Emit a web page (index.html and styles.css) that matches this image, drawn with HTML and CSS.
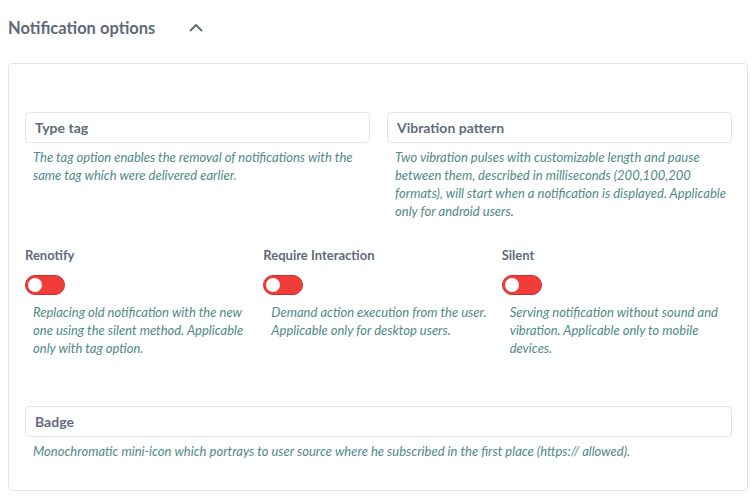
FILE: index.html
```html
<!DOCTYPE html>
<html>
<head>
<meta charset="utf-8">
<link rel="stylesheet" href="styles.css">
</head>
<body>
<div class="page">
  <div class="header">
    <span class="title">Notification options</span>
    <svg class="chevron" width="14" height="9" viewBox="0 0 14 9"><path d="M1.5 7.5 L7 2 L12.5 7.5" fill="none" stroke="#5d6977" stroke-width="1.8" stroke-linecap="round" stroke-linejoin="round"/></svg>
  </div>
  <div class="card">
    <div class="row-two">
      <div class="field">
        <div class="input">Type tag</div>
        <p class="desc">The tag option enables the removal of notifications with the same tag which were delivered earlier.</p>
      </div>
      <div class="field">
        <div class="input">Vibration pattern</div>
        <p class="desc">Two vibration pulses with customizable length and pause between them, described in milliseconds (200,100,200 formats), will start when a notification is displayed. Applicable only for android users.</p>
      </div>
    </div>
    <div class="row-three">
      <div class="toggle-field">
        <div class="label">Renotify</div>
        <div class="toggle"><span class="knob"></span></div>
        <p class="desc">Replacing old notification with the new one using the silent method. Applicable only with tag option.</p>
      </div>
      <div class="toggle-field">
        <div class="label">Require Interaction</div>
        <div class="toggle"><span class="knob"></span></div>
        <p class="desc">Demand action execution from the user. Applicable only for desktop users.</p>
      </div>
      <div class="toggle-field">
        <div class="label">Silent</div>
        <div class="toggle"><span class="knob"></span></div>
        <p class="desc">Serving notification without sound and vibration. Applicable only to mobile devices.</p>
      </div>
    </div>
    <div class="field badge">
      <div class="input">Badge</div>
      <p class="desc">Monochromatic mini-icon which portrays to user source where he subscribed in the first place (https:// allowed).</p>
    </div>
  </div>
</div>
</body>
</html>
```
FILE: styles.css
```css
html, body {
  margin: 0;
  padding: 0;
  background: #ffffff;
}
body {
  font-family: Lato, "Open Sans", sans-serif;
}
.page {
  padding: 0 7px 0 8px;
}
.header {
  height: 55px;
  display: flex;
  align-items: center;
  gap: 34px;
}
.title {
  font-size: 16.5px;
  font-weight: 700;
  color: #5d6977;
}
.chevron {
  display: block;
  margin-top: -1px;
}
.card {
  margin-top: 8px;
  border: 1px solid #e3e5e8;
  border-radius: 4px;
  padding: 48px 15px 30px 16px;
}
.row-two {
  display: grid;
  grid-template-columns: 1fr 1fr;
  column-gap: 17px;
}
.input {
  height: 29px;
  border: 1px solid #e3e5e8;
  border-radius: 4px;
  padding: 0 9px;
  display: flex;
  align-items: center;
  font-size: 14px;
  font-weight: 700;
  color: #5f6b7a;
}
.desc {
  margin: 5px 0 0 0;
  padding-left: 8px;
  font-size: 13px;
  line-height: 18px;
  font-style: italic;
  color: #4e8a87;
}
.row-three {
  margin-top: 26px;
  display: grid;
  grid-template-columns: repeat(3, 1fr);
  column-gap: 8px;
}
.label {
  font-size: 13px;
  line-height: 18px;
  font-weight: 700;
  color: #5f6b7a;
}
.toggle {
  margin-top: 11px;
  width: 38px;
  height: 18px;
  border: 1px solid #c8302f;
  border-radius: 10px;
  background: #f23c3a;
  position: relative;
}
.knob {
  position: absolute;
  left: 2px;
  top: 2px;
  width: 14px;
  height: 14px;
  border-radius: 50%;
  background: #ffffff;
}
.toggle-field .desc {
  margin-top: 8px;
}
.badge {
  margin-top: 49px;
}
```
